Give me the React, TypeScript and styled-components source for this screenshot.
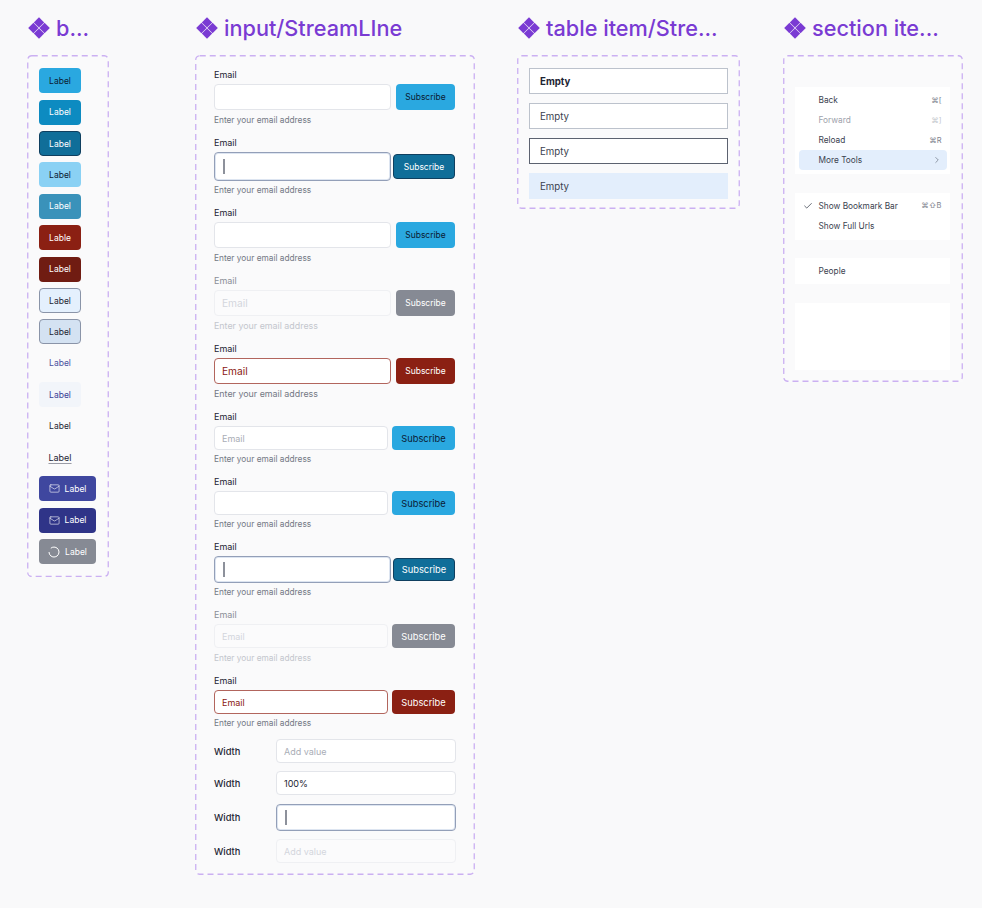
import React from "react";
import styled, { createGlobalStyle } from "styled-components";
import { Mail, Check, ChevronRight } from "lucide-react";

const GlobalStyle = createGlobalStyle`
  html, body {
    margin: 0;
    padding: 0;
    background: #f9f9fa;
    font-family: Inter, "Liberation Sans", sans-serif;
  }
`;

const Page = styled.div`
  display: flex;
  align-items: flex-start;
  width: 982px;
  height: 908px;
  padding-left: 27px;
  box-sizing: border-box;
  overflow: hidden;
`;

const Column = styled.section<{ $width: number; $gap: number }>`
  width: ${(p) => p.$width}px;
  margin-right: ${(p) => p.$gap}px;
  flex: none;
`;

const Title = styled.h2`
  display: flex;
  align-items: center;
  gap: 6px;
  height: 22px;
  margin: 17px 0 16px 1px;
  font-size: 21.7px;
  line-height: 22px;
  font-weight: 500;
  color: #7a3bd3;
  white-space: nowrap;
`;

const Frame = styled.div<{ $padding: string }>`
  position: relative;
  box-sizing: border-box;
  padding: ${(p) => p.$padding};
  background: #fafafb;
`;

const DashSvg = styled.svg`
  position: absolute;
  inset: 0;
  width: 100%;
  height: 100%;
  pointer-events: none;

  rect {
    x: 0.75px;
    y: 0.75px;
    width: calc(100% - 1.5px);
    height: calc(100% - 1.5px);
    fill: none;
    stroke: #cbb0f2;
    stroke-width: 1.3;
    stroke-dasharray: 6 4;
  }
`;

const Dashes = () => (
  <DashSvg>
    <rect rx="4" />
  </DashSvg>
);

const Diamonds = () => (
  <svg width="22" height="22" viewBox="0 0 22 22" fill="#7a3bd3">
    <path d="M11 .2 16.2 5.4 11 10.6 5.8 5.4Z" />
    <path d="M5.4 5.8 10.6 11 5.4 16.2 .2 11Z" />
    <path d="M16.6 5.8 21.8 11 16.6 16.2 11.4 11Z" />
    <path d="M11 11.4 16.2 16.6 11 21.8 5.8 16.6Z" />
  </svg>
);

/* buttons column */
const ButtonStack = styled.div`
  display: flex;
  flex-direction: column;
  align-items: flex-start;
  gap: 6.4px;
`;

type Tone = {
  bg: string;
  fg: string;
  border?: string;
};

const tones: Record<string, Tone> = {
  primary: { bg: "#2aa8e0", fg: "#0b1a33" },
  hover: { bg: "#0d8bc1", fg: "#ffffff" },
  pressed: { bg: "#106e99", fg: "#ffffff", border: "#0f3f5f" },
  light: { bg: "#8ad1f4", fg: "#0b1a33" },
  muted: { bg: "#3a92ba", fg: "#ffffff" },
  danger: { bg: "#8b2013", fg: "#ffffff" },
  dangerDark: { bg: "#701c12", fg: "#ffffff" },
  soft: { bg: "#e4f0fd", fg: "#1d2433", border: "#8a94a8" },
  softDark: { bg: "#d4e2f2", fg: "#1d2433", border: "#8a94a8" },
  ghost: { bg: "transparent", fg: "#4a519f" },
  ghostHover: { bg: "#f2f5fa", fg: "#3a4196" },
  plain: { bg: "transparent", fg: "#1d2433" },
  indigo: { bg: "#3f479f", fg: "#ffffff" },
  indigoDark: { bg: "#2f3488", fg: "#ffffff" },
  disabled: { bg: "#868a94", fg: "#ffffff" },
};

const Btn = styled.div<{ $tone: string; $width: number; $height: number; $size?: number }>`
  display: flex;
  align-items: center;
  justify-content: center;
  gap: 5px;
  flex: none;
  box-sizing: border-box;
  width: ${(p) => p.$width}px;
  height: ${(p) => p.$height}px;
  border-radius: 4px;
  background: ${(p) => tones[p.$tone].bg};
  color: ${(p) => tones[p.$tone].fg};
  border: ${(p) => (tones[p.$tone].border ? `1px solid ${tones[p.$tone].border}` : "none")};
  font-size: ${(p) => p.$size ?? 8.5}px;
  white-space: nowrap;
`;

const LinkLabel = styled.span`
  text-decoration: underline;
  text-decoration-color: #9a9ca6;
  text-underline-offset: 2px;
  font-size: 9px;
`;

const Spinner = () => (
  <svg width="12" height="12" viewBox="0 0 12 12" fill="none" stroke="#fff" strokeWidth="1">
    <path d="M2.8 2.2A5 5 0 1 1 1 6" />
  </svg>
);

const buttons = [
  ["primary", "Label"],
  ["hover", "Label"],
  ["pressed", "Label"],
  ["light", "Label"],
  ["muted", "Label"],
  ["danger", "Lable"],
  ["dangerDark", "Label"],
  ["soft", "Label"],
  ["softDark", "Label"],
  ["ghost", "Label"],
  ["ghostHover", "Label"],
  ["plain", "Label"],
];

/* input column */
const FieldStack = styled.div`
  display: flex;
  flex-direction: column;
`;

const Field = styled.div<{ $after: number }>`
  display: flex;
  flex-direction: column;
  margin-bottom: ${(p) => p.$after}px;
`;

const FieldLabel = styled.div<{ $off?: boolean }>`
  height: 14px;
  margin-bottom: 3px;
  font-size: 9px;
  line-height: 15px;
  color: ${(p) => (p.$off ? "#8b8f98" : "#1d2433")};
`;

const InputRow = styled.div<{ $gap: number }>`
  display: flex;
  align-items: center;
  gap: ${(p) => p.$gap}px;
`;

type InputState = "rest" | "focus" | "off" | "error" | "filled";

const InputBox = styled.div<{ $state: InputState; $height: number; $size?: number }>`
  display: flex;
  align-items: center;
  flex: 1;
  min-width: 0;
  box-sizing: border-box;
  height: ${(p) => p.$height}px;
  padding-left: 7px;
  border-radius: 4px;
  background: ${(p) => (p.$state === "off" ? "#fbfbfc" : "#ffffff")};
  border: 1px solid
    ${(p) =>
      p.$state === "focus"
        ? "#939fb8"
        : p.$state === "error"
          ? "#b2655d"
          : p.$state === "off"
            ? "#eff0f3"
            : "#e3e5ea"};
  box-shadow: ${(p) => (p.$state === "focus" ? "inset 0 0 0 1px #dde5f1" : "none")};
  font-size: ${(p) => p.$size ?? 9}px;
  color: ${(p) =>
    p.$state === "error"
      ? "#8b2013"
      : p.$state === "filled"
        ? "#1d2433"
        : p.$state === "off"
          ? "#d3d6dc"
          : "#a9adb6"};
`;

const Caret = styled.span`
  width: 2px;
  height: 15px;
  margin-left: 1px;
  background: #8d919b;
`;

const Helper = styled.div<{ $off?: boolean; $top: number; $size?: number }>`
  height: 14px;
  margin-top: ${(p) => p.$top}px;
  font-size: ${(p) => p.$size ?? 8.3}px;
  line-height: 14px;
  color: ${(p) => (p.$off ? "#c3c6cd" : "#737884")};
`;

type FieldSpec = {
  state: InputState;
  text?: string;
  inputH: number;
  btnW: number;
  btnH: number;
  tone: string;
  gap: number;
  top: number;
  after: number;
  textSize?: number;
  btnSize?: number;
  helperSize?: number;
};

const fields: FieldSpec[] = [
  { state: "rest", inputH: 26, btnW: 59, btnH: 26, tone: "primary", gap: 5, top: 3, after: 8 },
  { state: "focus", inputH: 29, btnW: 62, btnH: 25, tone: "pressed", gap: 2, top: 2, after: 8 },
  { state: "rest", inputH: 26, btnW: 59, btnH: 26, tone: "primary", gap: 5, top: 3, after: 8 },
  { state: "off", text: "Email", inputH: 26, btnW: 59, btnH: 26, tone: "disabled", gap: 5, top: 3, after: 8, textSize: 10.2, helperSize: 8.9 },
  { state: "error", text: "Email", inputH: 26, btnW: 59, btnH: 26, tone: "danger", gap: 5, top: 3, after: 8, textSize: 10.2, helperSize: 8.9 },
  { state: "rest", text: "Email", inputH: 24, btnW: 63, btnH: 24, tone: "primary", gap: 4, top: 2, after: 8, btnSize: 9.3 },
  { state: "rest", inputH: 24, btnW: 63, btnH: 24, tone: "primary", gap: 4, top: 2, after: 8, btnSize: 9.3 },
  { state: "focus", inputH: 27, btnW: 62, btnH: 23, tone: "pressed", gap: 2, top: 2, after: 8, btnSize: 9.3 },
  { state: "off", text: "Email", inputH: 24, btnW: 63, btnH: 24, tone: "disabled", gap: 4, top: 3, after: 8, btnSize: 9.3 },
  { state: "error", text: "Email", inputH: 24, btnW: 63, btnH: 24, tone: "danger", gap: 4, top: 2, after: 9, btnSize: 9.3 },
];

const WidthRow = styled.div<{ $after: number }>`
  display: grid;
  grid-template-columns: 62px 180px;
  align-items: center;
  margin-bottom: ${(p) => p.$after}px;
`;

const WidthLabel = styled.div`
  font-size: 9.3px;
  font-weight: 500;
  color: #1d2433;
`;

/* table column */
const TableStack = styled.div`
  display: flex;
  flex-direction: column;
  gap: 9px;
`;

const Cell = styled.div<{ $kind: "head" | "rest" | "active" | "selected" }>`
  display: flex;
  align-items: center;
  box-sizing: border-box;
  height: 26px;
  padding-left: ${(p) => (p.$kind === "selected" ? 11 : 10)}px;
  font-size: 9.7px;
  font-weight: ${(p) => (p.$kind === "head" ? 700 : 400)};
  color: ${(p) => (p.$kind === "head" ? "#1d2433" : "#3b4250")};
  background: ${(p) => (p.$kind === "selected" ? "#e3eefc" : "#ffffff")};
  border: ${(p) =>
    p.$kind === "selected" ? "none" : `1px solid ${p.$kind === "active" ? "#5c6270" : "#bcc2cc"}`};
`;

/* section column */
const SectionStack = styled.div`
  display: flex;
  flex-direction: column;
  gap: 18.5px;
`;

const Section = styled.div<{ $height: number }>`
  box-sizing: border-box;
  height: ${(p) => p.$height}px;
  padding: 3px 3.5px;
  background: #ffffff;
  display: flex;
  flex-direction: column;
`;

const Item = styled.div<{ $active?: boolean; $off?: boolean }>`
  display: grid;
  grid-template-columns: 16px 1fr auto;
  align-items: center;
  height: 20px;
  padding: 0 5px 0 4px;
  border-radius: 4px;
  background: ${(p) => (p.$active ? "#e3eefc" : "transparent")};
  color: ${(p) => (p.$off ? "#9ea2ab" : "#3b4250")};
  font-size: 8.3px;
`;

const Shortcut = styled.span<{ $off?: boolean }>`
  font-size: 7.5px;
  color: ${(p) => (p.$off ? "#c4c7cd" : "#7d828d")};
`;

const CheckSlot = styled.span`
  display: flex;
  align-items: center;
  color: #1d2433;
`;

export default function App() {
  return (
    <>
      <GlobalStyle />
      <Page>
        <Column $width={82} $gap={86}>
          <Title>
            <Diamonds />
            b...
          </Title>
          <Frame $padding="13.3px 0 13px 12px">
            <Dashes />
            <ButtonStack>
              {buttons.map(([tone, text], i) => (
                <Btn key={i} $tone={tone} $width={42} $height={25}>
                  {text}
                </Btn>
              ))}
              <Btn $tone="plain" $width={42} $height={25}>
                <LinkLabel>Label</LinkLabel>
              </Btn>
              <Btn $tone="indigo" $width={57} $height={25}>
                <Mail size={11} strokeWidth={1.3} />
                Label
              </Btn>
              <Btn $tone="indigoDark" $width={57} $height={25}>
                <Mail size={11} strokeWidth={1.3} />
                Label
              </Btn>
              <Btn $tone="disabled" $width={57} $height={25}>
                <Spinner />
                Label
              </Btn>
            </ButtonStack>
          </Frame>
        </Column>

        <Column $width={280} $gap={42}>
          <Title>
            <Diamonds />
            input/StreamLIne
          </Title>
          <Frame $padding="12px 20px 12px 19px">
            <Dashes />
            <FieldStack>
              {fields.map((f, i) => (
                <Field key={i} $after={f.after}>
                  <FieldLabel $off={f.state === "off"}>Email</FieldLabel>
                  <InputRow $gap={f.gap}>
                    <InputBox $state={f.state} $height={f.inputH} $size={f.textSize}>
                      {f.state === "focus" ? <Caret /> : f.text}
                    </InputBox>
                    <Btn $tone={f.tone} $width={f.btnW} $height={f.btnH} $size={f.btnSize}>
                      Subscribe
                    </Btn>
                  </InputRow>
                  <Helper $off={f.state === "off"} $top={f.top} $size={f.helperSize}>
                    Enter your email address
                  </Helper>
                </Field>
              ))}
              <WidthRow $after={8}>
                <WidthLabel>Width</WidthLabel>
                <InputBox $state="rest" $height={24}>
                  Add value
                </InputBox>
              </WidthRow>
              <WidthRow $after={9}>
                <WidthLabel>Width</WidthLabel>
                <InputBox $state="filled" $height={24}>
                  100%
                </InputBox>
              </WidthRow>
              <WidthRow $after={8}>
                <WidthLabel>Width</WidthLabel>
                <InputBox $state="focus" $height={27}>
                  <Caret />
                </InputBox>
              </WidthRow>
              <WidthRow $after={0}>
                <WidthLabel>Width</WidthLabel>
                <InputBox $state="off" $height={24}>
                  Add value
                </InputBox>
              </WidthRow>
            </FieldStack>
          </Frame>
        </Column>

        <Column $width={223} $gap={43}>
          <Title>
            <Diamonds />
            table item/Stre...
          </Title>
          <Frame $padding="13px 12px 10px 12px">
            <Dashes />
            <TableStack>
              <Cell $kind="head">Empty</Cell>
              <Cell $kind="rest">Empty</Cell>
              <Cell $kind="active">Empty</Cell>
              <Cell $kind="selected">Empty</Cell>
            </TableStack>
          </Frame>
        </Column>

        <Column $width={180} $gap={0}>
          <Title>
            <Diamonds />
            section ite...
          </Title>
          <Frame $padding="32px 13px 12.5px 12px">
            <Dashes />
            <SectionStack>
              <Section $height={87}>
                <Item>
                  <span />
                  Back
                  <Shortcut>⌘[</Shortcut>
                </Item>
                <Item $off>
                  <span />
                  Forward
                  <Shortcut $off>⌘]</Shortcut>
                </Item>
                <Item>
                  <span />
                  Reload
                  <Shortcut>⌘R</Shortcut>
                </Item>
                <Item $active>
                  <span />
                  More Tools
                  <ChevronRight size={10} strokeWidth={1.2} />
                </Item>
              </Section>
              <Section $height={47}>
                <Item>
                  <CheckSlot>
                    <Check size={10} strokeWidth={1.6} />
                  </CheckSlot>
                  Show Bookmark Bar
                  <Shortcut>⌘⇧B</Shortcut>
                </Item>
                <Item>
                  <span />
                  Show Full Urls
                  <span />
                </Item>
              </Section>
              <Section $height={26}>
                <Item>
                  <span />
                  People
                  <span />
                </Item>
              </Section>
              <Section $height={67} />
            </SectionStack>
          </Frame>
        </Column>
      </Page>
    </>
  );
}
